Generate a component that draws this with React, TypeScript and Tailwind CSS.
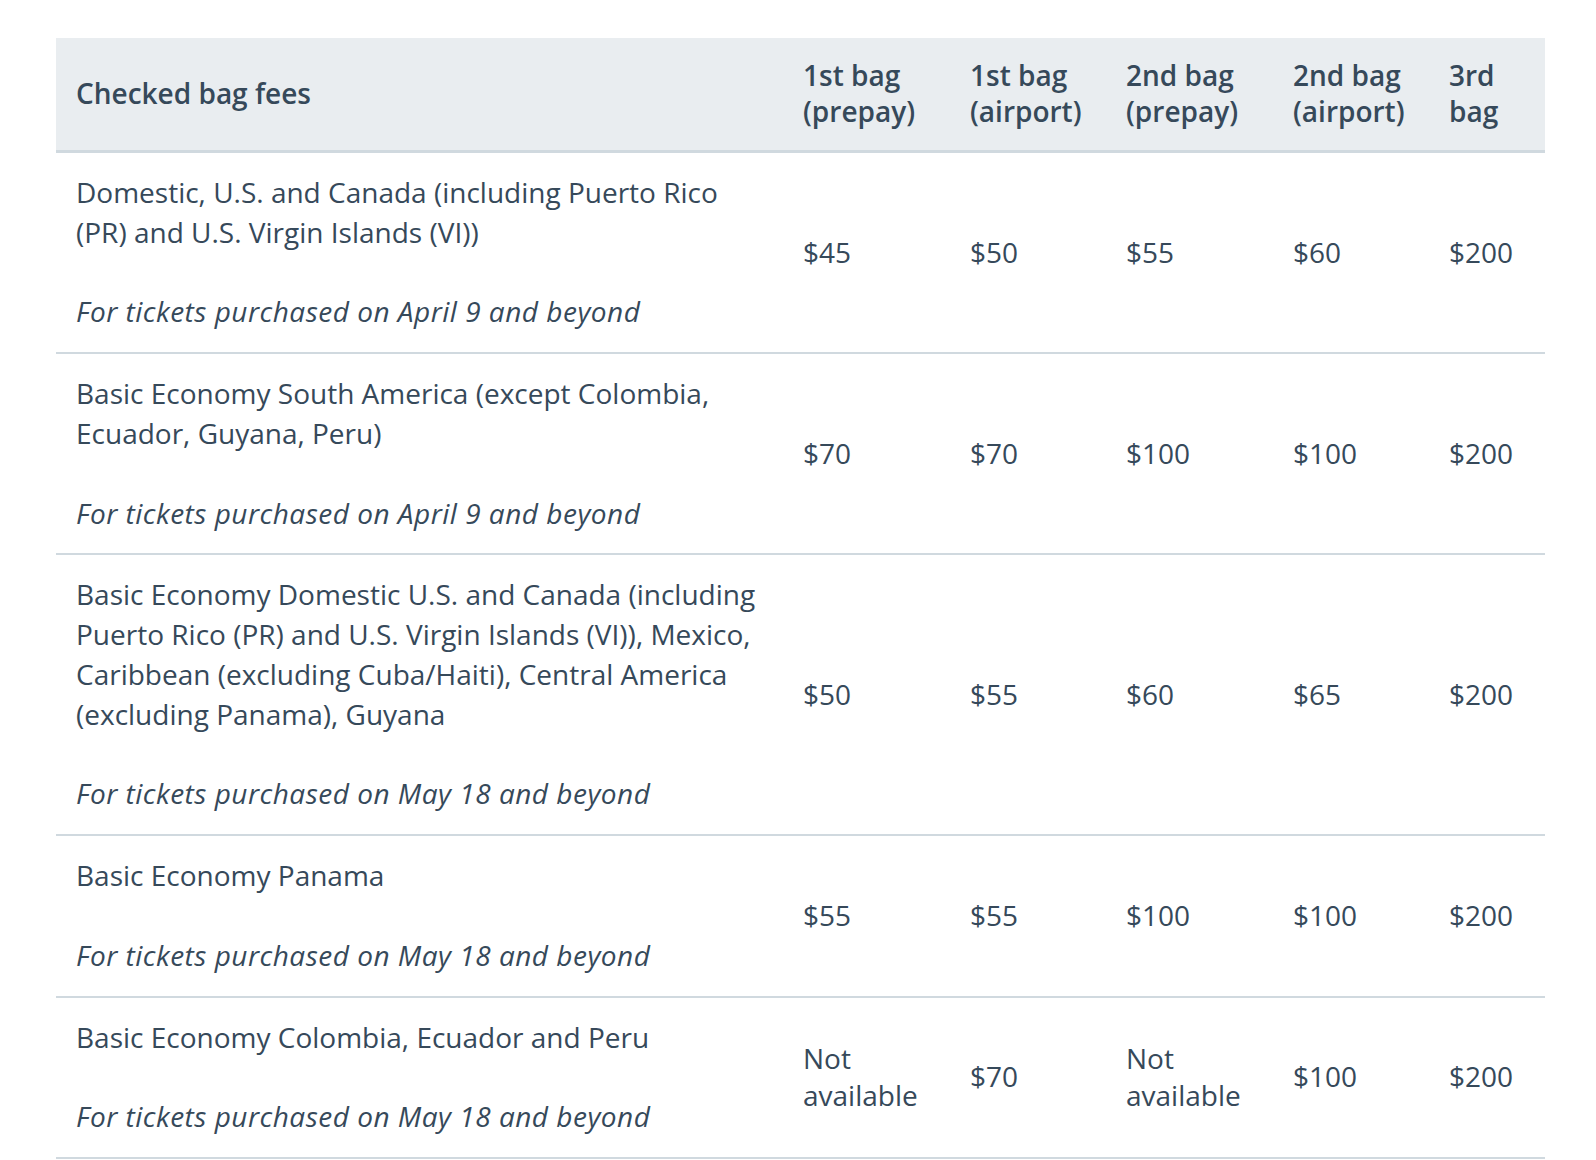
const headers = [
  { label: 'Checked bag fees' },
  { label: '1st bag (prepay)' },
  { label: '1st bag (airport)' },
  { label: '2nd bag (prepay)' },
  { label: '2nd bag (airport)' },
  { label: '3rd bag' },
];

const rows = [
  {
    name: 'Domestic, U.S. and Canada (including Puerto Rico (PR) and U.S. Virgin Islands (VI))',
    note: 'For tickets purchased on April 9 and beyond',
    fees: ['$45', '$50', '$55', '$60', '$200'],
  },
  {
    name: 'Basic Economy South America (except Colombia, Ecuador, Guyana, Peru)',
    note: 'For tickets purchased on April 9 and beyond',
    fees: ['$70', '$70', '$100', '$100', '$200'],
  },
  {
    name: 'Basic Economy Domestic U.S. and Canada (including Puerto Rico (PR) and U.S. Virgin Islands (VI)), Mexico, Caribbean (excluding Cuba/Haiti), Central America (excluding Panama), Guyana',
    note: 'For tickets purchased on May 18 and beyond',
    fees: ['$50', '$55', '$60', '$65', '$200'],
  },
  {
    name: 'Basic Economy Panama',
    note: 'For tickets purchased on May 18 and beyond',
    fees: ['$55', '$55', '$100', '$100', '$200'],
  },
  {
    name: 'Basic Economy Colombia, Ecuador and Peru',
    note: 'For tickets purchased on May 18 and beyond',
    fees: ['Not available', '$70', 'Not available', '$100', '$200'],
  },
];

export default function App() {
  return (
    <div className="min-h-screen bg-white pl-[56px] pt-[38px] font-['Open_Sans',sans-serif] text-[#36495a]">
      <table className="w-[1489px] table-fixed border-collapse text-left">
        <colgroup>
          <col className="w-[727px]" />
          <col className="w-[167px]" />
          <col className="w-[156px]" />
          <col className="w-[167px]" />
          <col className="w-[156px]" />
          <col className="w-[116px]" />
        </colgroup>
        <thead>
          <tr className="border-b-[3px] border-[#d0d9df] bg-[#e9edf0]">
            {headers.map((h) => (
              <th
                key={h.label}
                className="px-[20px] pt-[19px] pb-[21px] align-middle text-[28px] font-semibold leading-[36px]"
              >
                {h.label}
              </th>
            ))}
          </tr>
        </thead>
        <tbody>
          {rows.map((row) => (
            <tr key={row.name} className="border-b-2 border-[#d0d9df]">
              <td className="px-[20px] py-[20px] align-top text-[28px] leading-[39.8px]">
                <p>{row.name}</p>
                <p className="mt-[39.8px] italic tracking-[0.5px]">{row.note}</p>
              </td>
              {row.fees.map((fee, i) => (
                <td
                  key={i}
                  className="px-[20px] py-[20px] align-middle text-[28px] leading-[37.5px]"
                >
                  {fee}
                </td>
              ))}
            </tr>
          ))}
        </tbody>
      </table>
    </div>
  );
}
